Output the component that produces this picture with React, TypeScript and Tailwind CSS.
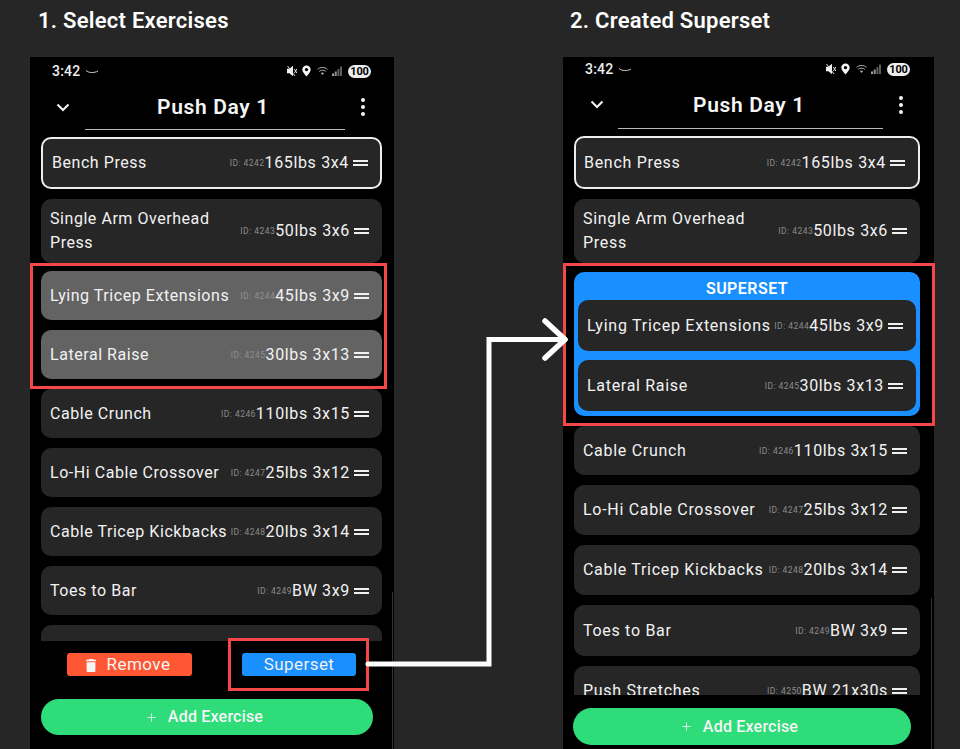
import { Plus } from 'lucide-react';

type Row = {
  name: string;
  id: number;
  value: string;
  h: string;
  mt?: string;
  tone?: string;
  pad?: string;
  nameClass?: string;
  idClass?: string;
};

function Handle() {
  return (
    <div className="ml-[4px] flex w-[15px] shrink-0 flex-col gap-[2px]">
      <div className="h-[2px] bg-[#f0f0f0]" />
      <div className="h-[2px] bg-[#f0f0f0]" />
    </div>
  );
}

function ExerciseRow({
  name,
  id,
  value,
  h,
  mt = '',
  tone = 'bg-[#262626] rounded-[10px]',
  pad = 'pl-[9px] pr-[13px]',
  nameClass = 'text-[16px] tracking-[0.55px]',
  idClass = 'text-[#8c8c8c]',
}: Row) {
  return (
    <div className={`flex shrink-0 items-center ${pad} ${h} ${mt} ${tone}`}>
      <div className={`min-w-0 flex-1 leading-[24px] text-[#f2f2f2] ${nameClass}`}>{name}</div>
      <span className={`shrink-0 pt-[1px] text-[8.5px] tracking-[0.45px] ${idClass}`}>ID: {id}</span>
      <span className="shrink-0 text-[16px] tracking-[0.65px] text-[#f2f2f2]">{value}</span>
      <Handle />
    </div>
  );
}

function StatusBar({ h, pr }: { h: string; pr: string }) {
  return (
    <div className={`flex shrink-0 items-center pl-[22px] ${h} ${pr}`}>
      <span className="text-[14px] font-medium tracking-[0.2px] text-[#eeeeee]">3:42</span>
      <svg className="ml-[5px] mt-[1px]" width="14" height="6" viewBox="0 0 14 6" fill="none">
        <path d="M1 1.5c3 2.6 8 2.6 12 .6" stroke="#cfcfcf" strokeWidth="1" />
      </svg>
      <div className="ml-auto flex items-center">
        <svg width="10" height="12" viewBox="0 0 10 12">
          <path d="M0 3.8h2.4L6 .8v10.4L2.4 8.2H0z" fill="#f0f0f0" />
          <path d="M7.4 4l2.4 4M9.8 4L7.4 8M0.5 1l7.5 10" stroke="#e0e0e0" strokeWidth="1" />
        </svg>
        <svg className="ml-[5px]" width="9" height="12" viewBox="0 0 9 12">
          <path fillRule="evenodd" d="M4.5 0.5a4.2 4.2 0 0 1 4.2 4.2c0 2.5-2.7 4.8-4.2 6.8-1.5-2-4.2-4.3-4.2-6.8a4.2 4.2 0 0 1 4.2-4.2zm0 2.4a1.7 1.7 0 1 0 0 3.4 1.7 1.7 0 0 0 0-3.4z" fill="#f5f5f5" />
        </svg>
        <svg className="ml-[6px]" width="11" height="10" viewBox="0 0 11 10" fill="none">
          <path d="M0.5 3.4c2.8-2.6 7.2-2.6 10 0M2.2 5.4c1.8-1.6 4.8-1.6 6.6 0" stroke="#b0b0b0" strokeWidth="1" />
          <path d="M5.5 9L3.9 7c.9-.7 2.3-.7 3.2 0z" fill="#b0b0b0" />
        </svg>
        <svg className="ml-[4px]" width="10" height="10" viewBox="0 0 10 10">
          <rect x="0" y="7.5" width="2" height="2.5" fill="#a0a0a0" />
          <rect x="2.7" y="5.5" width="2" height="4.5" fill="#8f8f8f" />
          <rect x="5.4" y="3" width="2" height="7" fill="#5e5e5e" />
          <rect x="8" y="0.5" width="2" height="9.5" fill="#5e5e5e" />
        </svg>
        <span className="ml-[6px] flex h-[13px] w-[23px] items-center justify-center rounded-full bg-[#eeeeee] text-[11px] font-bold leading-none tracking-[-0.2px] text-black">
          100
        </span>
      </div>
    </div>
  );
}

function Header({ h, pl, pr, lineClass }: { h: string; pl: string; pr: string; lineClass: string }) {
  return (
    <>
      <div className={`flex shrink-0 items-center ${h} ${pl} ${pr}`}>
        <svg width="14" height="9" viewBox="0 0 14 9" fill="none">
          <path d="M1.5 1.5L7 7l5.5-5.5" stroke="#f5f5f5" strokeWidth="2" />
        </svg>
        <div className="flex-1 pr-[5px] pt-[2px] text-center text-[21px] font-semibold tracking-[0.65px] text-[#f5f5f5]">Push Day 1</div>
        <div className="flex flex-col gap-[3px]">
          <div className="h-[4px] w-[4px] rounded-full bg-[#f5f5f5]" />
          <div className="h-[4px] w-[4px] rounded-full bg-[#f5f5f5]" />
          <div className="h-[4px] w-[4px] rounded-full bg-[#f5f5f5]" />
        </div>
      </div>
      <div className={`h-px shrink-0 bg-[#b8b8b8] ${lineClass}`} />
    </>
  );
}

const benchBorder = 'rounded-[10px] border-2 border-[#eeeeee] bg-[#262626]';
const selected = 'rounded-[10px] bg-[#636363]';
const selectedId = 'text-[#8f8f8f]';
const bigName = 'text-[16px] tracking-[0.7px]';

export default function App() {
  return (
    <div className="relative flex h-[749px] w-[960px] overflow-hidden bg-[#262626] font-['Roboto',sans-serif]">
      {/* 1. Select Exercises */}
      <div className="ml-[30px] flex w-[364px] shrink-0 flex-col">
        <h2 className="flex h-[57px] shrink-0 items-start pl-[8px] pt-[6px] text-[22px] font-semibold leading-[29px] tracking-[0.25px] text-white">
          1. Select Exercises
        </h2>
        <div className="flex flex-1 flex-col bg-black">
          <StatusBar h="h-[28px]" pr="pr-[23px]" />
          <Header h="h-[44px]" pl="pl-[26px]" pr="pr-[29px]" lineClass="ml-[55px] w-[260px]" />
          <div className="ml-[11px] mt-[7px] flex h-[504px] w-[341px] flex-col overflow-hidden">
            <ExerciseRow name="Bench Press" id={4242} value="165lbs 3x4" h="h-[52px]" tone={benchBorder} pad="pl-[9px] pr-[12px]" />
            <ExerciseRow name="Single Arm Overhead Press" id={4243} value="50lbs 3x6" h="h-[64px]" mt="mt-[10px]" nameClass="pr-[20px] text-[16px] tracking-[0.55px]" />
            <ExerciseRow name="Lying Tricep Extensions" id={4244} value="45lbs 3x9" h="h-[49px]" mt="mt-[8px]" tone={selected} idClass={selectedId} />
            <ExerciseRow name="Lateral Raise" id={4245} value="30lbs 3x13" h="h-[49px]" mt="mt-[10px]" tone={selected} idClass={selectedId} />
            <ExerciseRow name="Cable Crunch" id={4246} value="110lbs 3x15" h="h-[49px]" mt="mt-[10px]" />
            <ExerciseRow name="Lo-Hi Cable Crossover" id={4247} value="25lbs 3x12" h="h-[49px]" mt="mt-[10px]" />
            <ExerciseRow name="Cable Tricep Kickbacks" id={4248} value="20lbs 3x14" h="h-[49px]" mt="mt-[10px]" />
            <ExerciseRow name="Toes to Bar" id={4249} value="BW 3x9" h="h-[49px]" mt="mt-[10px]" />
            <div className="mt-[10px] h-[49px] shrink-0 rounded-[10px] bg-[#262626]" />
          </div>
          <div className="ml-[37px] mt-[12px] flex items-center">
            <button className="flex h-[23px] w-[125px] items-center justify-center rounded-[3px] bg-[#ff5733] pr-[3px] pt-[1px] text-[17px] tracking-[0.45px] text-[#f5f5f5]">
              <svg className="mr-[11px]" width="10" height="13" viewBox="0 0 10 13">
                <path d="M3 0h4l.6.8H10v1.5H0V.8h2.4zM.6 3.2h8.8V12a1 1 0 0 1-1 1H1.6a1 1 0 0 1-1-1z" fill="#f5f5f5" />
              </svg>
              Remove
            </button>
            <button className="ml-[50px] flex h-[23px] w-[114px] items-center justify-center rounded-[3px] bg-[#1a8fff] pt-[1px] text-[17px] tracking-[0.45px] text-[#f0f0f0]">
              Superset
            </button>
          </div>
          <button className="ml-[11px] mt-[23px] flex h-[36px] w-[332px] shrink-0 items-center justify-center rounded-full bg-[#2fdc7a] pr-[6px] text-[16px] font-medium tracking-[0.2px] text-[#f5f5f5]">
            <Plus size={13} strokeWidth={1.5} className="mr-[10px]" />
            Add Exercise
          </button>
        </div>
      </div>

      {/* 2. Created Superset */}
      <div className="ml-[169px] flex w-[371px] shrink-0 flex-col">
        <h2 className="-ml-[3px] flex h-[57px] shrink-0 items-start pl-[10px] pt-[6px] text-[22px] font-semibold leading-[29px] tracking-[0.25px] text-white">
          2. Created Superset
        </h2>
        <div className="flex flex-1 flex-col bg-black">
          <StatusBar h="h-[24px]" pr="pr-[24px]" />
          <Header h="h-[47px]" pl="pl-[27px]" pr="pr-[31px]" lineClass="ml-[55px] w-[265px]" />
          <div className="ml-[11px] mt-[7px] flex h-[559px] w-[346px] flex-col overflow-hidden">
            <ExerciseRow name="Bench Press" id={4242} value="165lbs 3x4" h="h-[53px]" tone={benchBorder} pad="pl-[8px] pr-[13px]" nameClass={bigName} />
            <ExerciseRow name="Single Arm Overhead Press" id={4243} value="50lbs 3x6" h="h-[64px]" mt="mt-[10px]" nameClass="pr-[20px] text-[16px] tracking-[0.7px]" />
            <div className="mt-[9px] flex h-[144px] shrink-0 flex-col rounded-[10px] bg-[#1a8fff] px-[4px]">
              <div className="h-[28px] shrink-0 pt-[6px] text-center text-[16px] font-semibold leading-[22px] tracking-[0.45px] text-white">SUPERSET</div>
              <ExerciseRow name="Lying Tricep Extensions" id={4244} value="45lbs 3x9" h="h-[51px]" nameClass="whitespace-nowrap text-[16px] tracking-[0.75px]" />
              <ExerciseRow name="Lateral Raise" id={4245} value="30lbs 3x13" h="h-[51px]" mt="mt-[9px]" nameClass={bigName} />
            </div>
            <ExerciseRow name="Cable Crunch" id={4246} value="110lbs 3x15" h="h-[49px]" mt="mt-[10px]" nameClass={bigName} />
            <ExerciseRow name="Lo-Hi Cable Crossover" id={4247} value="25lbs 3x12" h="h-[50px]" mt="mt-[10px]" nameClass={bigName} />
            <ExerciseRow name="Cable Tricep Kickbacks" id={4248} value="20lbs 3x14" h="h-[50px]" mt="mt-[10px]" nameClass={bigName} />
            <ExerciseRow name="Toes to Bar" id={4249} value="BW 3x9" h="h-[51px]" mt="mt-[10px]" nameClass={bigName} />
            <ExerciseRow name="Push Stretches" id={4250} value="BW 21x30s" h="h-[50px]" mt="mt-[10px]" nameClass={bigName} />
          </div>
          <button className="ml-[10px] mt-[13px] flex h-[37px] w-[338px] shrink-0 items-center justify-center rounded-full bg-[#2fdc7a] pr-[6px] text-[16px] font-medium tracking-[0.2px] text-[#f5f5f5]">
            <Plus size={13} strokeWidth={1.5} className="mr-[10px]" />
            Add Exercise
          </button>
        </div>
      </div>

      {/* scroll edge lines */}
      <div className="absolute left-[392px] top-[592px] h-[157px] w-px bg-[#333333]" />
      <div className="absolute left-[931px] top-[598px] h-[151px] w-px bg-[#333333]" />

      {/* red highlight boxes */}
      <div className="absolute left-[30px] top-[263px] h-[126px] w-[357px] border-[3px] border-[#f44848]" />
      <div className="absolute left-[228px] top-[638px] h-[53px] w-[141px] border-[3px] border-[#f44848]" />
      <div className="absolute left-[563px] top-[263px] h-[163px] w-[372px] border-[3px] border-[#f44848]" />

      {/* connector arrow */}
      <svg className="absolute left-0 top-0" width="960" height="749" viewBox="0 0 960 749" fill="none">
        <path d="M368 664H489V339.5H565" stroke="#ffffff" strokeWidth="5" strokeLinecap="round" strokeLinejoin="miter" />
        <path d="M545 321L565 339.5L545 358" stroke="#ffffff" strokeWidth="5.5" strokeLinecap="round" strokeLinejoin="round" />
      </svg>
    </div>
  );
}
